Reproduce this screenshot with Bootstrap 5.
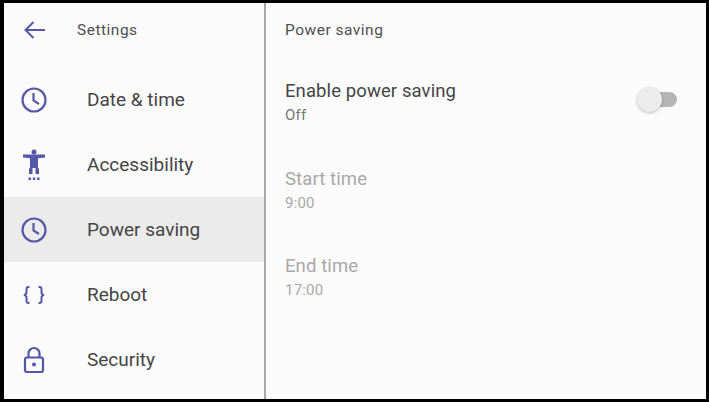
<!DOCTYPE html>
<html lang="en">
<head>
  <meta charset="UTF-8">
  <title>Power saving</title>
  <link href="https://cdn.jsdelivr.net/npm/bootstrap@5.3.3/dist/css/bootstrap.min.css" rel="stylesheet">
  <style>
    html, body { height: 100%; }
    body { background: #000; font-family: Roboto, "Liberation Sans", sans-serif; color: #444; overflow: hidden; }
    .screen-frame { margin: 3px 3px 3px 4px; background: #fbfbfb; height: 396px; }
    .side-pane { width: 262px; border-right: 2px solid #a9a9a9; flex: none; }
    .head-row { height: 54px; }
    .back-btn { width: 73px; padding-left: 19px; }
    .head-title { font-size: 15.5px; letter-spacing: .5px; color: #505050; padding-top: 2px; }
    .menu-list { margin-top: 10px; }
    .menu-row { height: 65px; color: #454545; font-size: 19px; }
    .menu-row.selected { background: #ebebeb; }
    .menu-row span { padding-top: 2px; }
    .menu-ico { width: 83px; padding-left: 16px; flex: none; line-height: 0; }
    .main-pane { padding-left: 19px; padding-right: 29px; }
    .setting-row { height: 87px; }
    .setting-top { height: 90px; padding-top: 18px; margin-top: 4px; }
    .setting-name { font-size: 18.5px; line-height: 24px; color: #454545; letter-spacing: .1px; }
    .setting-val { font-size: 15px; line-height: 20px; margin-top: 2px; color: #777; letter-spacing: .2px; }
    .dimmed .setting-name, .dimmed .setting-val { color: #a8a8a8; }
    .toggle-track { width: 35px; height: 15px; border-radius: 8px; background: #b5b5b5; position: relative; margin-top: 13px; }
    .toggle-knob { position: absolute; left: -5px; top: -5px; width: 25px; height: 25px; border-radius: 50%; background: #ececec; box-shadow: 0 1px 3px rgba(0,0,0,.25); }
    svg { color: #5558a8; }
  </style>
</head>
<body>
  <div class="screen-frame d-flex">
    <div class="side-pane">
      <div class="head-row d-flex align-items-center">
        <div class="back-btn lh-1">
          <svg width="23" height="20" viewBox="0 0 23 20" fill="none" stroke="currentColor" stroke-width="2"><path d="M22 10H2.500M10.500 2l-8 8 8 8"/></svg>
        </div>
        <span class="head-title">Settings</span>
      </div>
      <div class="menu-list">
        <div class="menu-row d-flex align-items-center">
          <div class="menu-ico"><svg width="28" height="28" viewBox="0 0 28 28" fill="none" stroke="currentColor" stroke-width="2.2"><circle cx="14" cy="14" r="11.500"/><path d="M13.500 7v7.500l5.500 3.500"/></svg></div>
          <span>Date &amp; time</span>
        </div>
        <div class="menu-row d-flex align-items-center">
          <div class="menu-ico"><svg width="28" height="32" viewBox="0 0 28 32" fill="currentColor"><circle cx="14" cy="3" r="2.500"/><path d="M3 5.500h22v3l-7 .8v9.700l1 .7V25h-3.500v-6h-3v6H9v-5.300l1-.7V9.300L3 8.500z"/><rect x="8.500" y="28.500" width="2.500" height="2.500"/><rect x="12.750" y="28.500" width="2.500" height="2.500"/><rect x="17" y="28.500" width="2.500" height="2.500"/></svg></div>
          <span>Accessibility</span>
        </div>
        <div class="menu-row selected d-flex align-items-center">
          <div class="menu-ico"><svg width="28" height="28" viewBox="0 0 28 28" fill="none" stroke="currentColor" stroke-width="2.2"><circle cx="14" cy="14" r="11.500"/><path d="M13.500 7v7.500l5.500 3.500"/></svg></div>
          <span>Power saving</span>
        </div>
        <div class="menu-row d-flex align-items-center">
          <div class="menu-ico"><svg width="28" height="20" viewBox="0 0 28 20" fill="none" stroke="currentColor" stroke-width="2"><path d="M9.500 2H8.500C7 2 6.500 3 6.500 4.200V7.500c0 1.200-1 2.200-2.500 2.500 1.500.3 2.500 1.300 2.500 2.500v3.300C6.500 17 7 18 8.500 18h1M18.500 2h1c1.500 0 2 1 2 2.200V7.500c0 1.200 1 2.200 2.500 2.500-1.500.3-2.500 1.300-2.500 2.500v3.300c0 1.200-.5 2.200-2 2.200h-1"/></svg></div>
          <span>Reboot</span>
        </div>
        <div class="menu-row d-flex align-items-center">
          <div class="menu-ico"><svg width="28" height="28" viewBox="0 0 28 28" fill="none" stroke="currentColor" stroke-width="2.200"><rect x="5" y="11.500" width="18" height="14.500" rx="2"/><path d="M8.500 11.500V7.500a5.500 5.500 0 0 1 11 0v4"/><circle cx="14" cy="18.500" r="2" fill="currentColor" stroke="none"/></svg></div>
          <span>Security</span>
        </div>
      </div>
    </div>
    <div class="main-pane flex-grow-1">
      <div class="head-row d-flex align-items-center">
        <span class="head-title">Power saving</span>
      </div>
      <div class="setting-row setting-top d-flex justify-content-between align-items-start">
        <div>
          <div class="setting-name">Enable power saving</div>
          <div class="setting-val">Off</div>
        </div>
        <div class="toggle-track"><div class="toggle-knob"></div></div>
      </div>
      <div class="setting-row dimmed pt-3">
        <div class="setting-name">Start time</div>
        <div class="setting-val">9:00</div>
      </div>
      <div class="setting-row dimmed pt-3">
        <div class="setting-name">End time</div>
        <div class="setting-val">17:00</div>
      </div>
    </div>
  </div>
  <script src="https://cdn.jsdelivr.net/npm/bootstrap@5.3.3/dist/js/bootstrap.bundle.min.js"></script>
</body>
</html>
